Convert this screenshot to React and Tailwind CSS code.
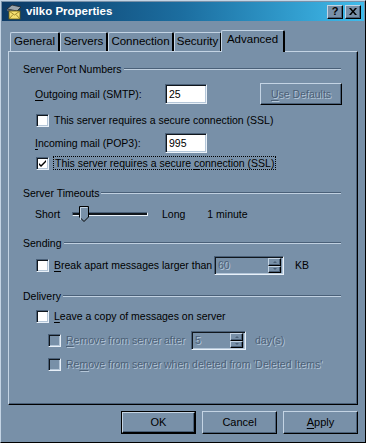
import React from "react";

const raised =
  "border border-t-[#c4d4e4] border-l-[#c4d4e4] border-r-black border-b-black shadow-[inset_-1px_-1px_0_#4a6078]";
const sunken =
  "border border-t-[#4a6078] border-l-[#4a6078] border-r-[#e8f0f8] border-b-[#e8f0f8] shadow-[inset_1px_1px_0_#10161c,inset_-1px_-1px_0_#b4c6d8]";
const disabledText = "text-[#4c6076] [text-shadow:1px_1px_0_#b4c6d8]";

const U = ({ children }) => <span className="underline underline-offset-2">{children}</span>;

const Checkbox = ({ checked, disabled }) => (
  <div
    className={`w-[13px] h-[13px] shrink-0 flex items-center justify-center ${sunken} ${
      disabled ? "bg-[#7890a8]" : "bg-white"
    }`}
  >
    {checked && (
      <svg width="9" height="9" viewBox="0 0 9 9">
        <path d="M1 4 L3 6 L8 1 L8 3 L3 8 L1 6 Z" fill="#000" />
      </svg>
    )}
  </div>
);

const GroupHeader = ({ label }) => (
  <div className="flex items-center h-[14px] pl-[14px] pr-[16px]">
    <span className="pr-[2px] whitespace-nowrap">{label}</span>
    <div className="flex-1 h-[2px] border-t border-t-[#4a6078] border-b border-b-[#c0d0e0]" />
  </div>
);

const Spinner = ({ value, width }) => (
  <div className={`${width} h-[19px] shrink-0 flex items-center ${sunken} bg-[#7890a8] pl-[3px] pr-[2px]`}>
    <span className={`flex-1 ${disabledText}`}>{value}</span>
    <div className="flex flex-col w-[13px] h-[15px]">
      <div className={`flex-1 flex items-center justify-center ${raised}`}>
        <div className="w-0 h-0 border-x-[2px] border-x-transparent border-b-[2px] border-b-[#4c6076]" />
      </div>
      <div className={`flex-1 flex items-center justify-center ${raised}`}>
        <div className="w-0 h-0 border-x-[2px] border-x-transparent border-t-[2px] border-t-[#4c6076]" />
      </div>
    </div>
  </div>
);

const Tab = ({ label, active }) => (
  <div
    className={`relative flex items-center justify-center border-l border-t border-l-[#c4d4e4] border-t-[#c4d4e4] rounded-t-[2px] border-r-2 border-r-black bg-[#7890a8] ${
      active ? "h-[22px] z-10 -mb-[1px] pb-[3px]" : "h-[19px]"
    }`}
  >
    <span className="text-[11.5px] whitespace-nowrap">{label}</span>
  </div>
);

export default function App() {
  return (
    <div className="w-[366px] h-[443px] bg-[#7890a8] text-black text-[10.5px] leading-none whitespace-nowrap [font-family:'Liberation_Sans',Arial,sans-serif] border border-t-[#c4d4e4] border-l-[#c4d4e4] border-r-black border-b-black p-[1px] overflow-hidden">
      {/* Title bar */}
      <div className="h-[19px] flex items-center bg-gradient-to-r from-[#0c3a66] via-[#1c6ea0] to-[#40bcec] pl-[3px] pr-[3px]">
        <svg width="18" height="16" viewBox="0 0 18 16" className="shrink-0">
          <path d="M2 5 L7 1 L16 3 L12 7 Z" fill="#9aa4ac" stroke="#202428" strokeWidth="0.8" />
          <path d="M2 5 L12 7 L12 9 L2 7 Z" fill="#5a6470" />
          <rect x="4" y="7" width="11" height="8" fill="#f4e070" stroke="#6a5a10" strokeWidth="0.8" />
          <path d="M4 7 L9.5 11 L15 7 M4 15 L8 10.5 M15 15 L11 10.5" fill="none" stroke="#8a7420" strokeWidth="0.8" />
        </svg>
        <span className="ml-[3px] text-white font-bold text-[11.5px]">vilko Properties</span>
        <div className="ml-auto flex gap-[2px]">
          <div className={`w-[16px] h-[14px] flex items-center justify-center bg-[#7890a8] ${raised}`}>
            <span className="font-bold text-[11px]">?</span>
          </div>
          <div className={`w-[16px] h-[14px] flex items-center justify-center bg-[#7890a8] ${raised}`}>
            <svg width="8" height="7" viewBox="0 0 8 7">
              <path d="M0 0 L2 0 L4 2.5 L6 0 L8 0 L5 3.5 L8 7 L6 7 L4 4.5 L2 7 L0 7 L3 3.5 Z" fill="#000" />
            </svg>
          </div>
        </div>
      </div>

      {/* Tabs */}
      <div className="flex items-end pl-[8px] mt-[8px] h-[22px]">
        <div className="w-[50px]"><Tab label="General" /></div>
        <div className="w-[48px]"><Tab label="Servers" /></div>
        <div className="w-[66px]"><Tab label="Connection" /></div>
        <div className="w-[48px]"><Tab label="Security" /></div>
        <div className="w-[64px] -ml-[1px]"><Tab label="Advanced" active /></div>
      </div>

      {/* Panel */}
      <div className="ml-[6px] w-[350px] h-[354px] border border-t-[#c4d4e4] border-l-[#c4d4e4] border-r-black border-b-black shadow-[inset_-1px_-1px_0_#4a6078] flex flex-col">
        <div className="mt-[10px]">
          <GroupHeader label="Server Port Numbers" />
        </div>
        <div className="mt-[7px] h-[22px] flex items-center">
          <span className="ml-[26px] w-[130px]"><U>O</U>utgoing mail (SMTP):</span>
          <div className={`w-[42px] h-[20px] bg-white flex items-center pl-[3px] ${sunken}`}>25</div>
          <div className={`ml-[53px] w-[82px] h-[22px] flex items-center justify-center ${raised} ${disabledText}`}>
            <span><U>U</U>se Defaults</span>
          </div>
        </div>
        <div className="mt-[8px] h-[14px] flex items-center pl-[27px] gap-[5px]">
          <Checkbox />
          <span>This server requires a secure connection (SSL)</span>
        </div>
        <div className="mt-[6px] h-[20px] flex items-center">
          <span className="ml-[26px] w-[130px]"><U>I</U>ncoming mail (POP3):</span>
          <div className={`w-[42px] h-[20px] bg-white flex items-center pl-[3px] ${sunken}`}>995</div>
        </div>
        <div className="mt-[3px] h-[14px] flex items-center pl-[27px] gap-[5px]">
          <Checkbox checked />
          <span className="outline outline-1 outline-dotted outline-black px-[1px] py-[1px]">
            This server requires a secure <U>c</U>onnection (SSL)
          </span>
        </div>

        <div className="mt-[16px]">
          <GroupHeader label="Server Timeouts" />
        </div>
        <div className="mt-[2px] h-[24px] flex items-center">
          <span className="ml-[26px] w-[37px]">Short</span>
          <div className="relative w-[76px] h-[24px] flex items-center">
            <div className="w-full h-[4px] border border-t-[#4a6078] border-l-[#4a6078] border-r-[#e8f0f8] border-b-[#e8f0f8] bg-[#10161c]" />
            <svg className="absolute left-[7px] top-[4px]" width="10" height="16" viewBox="0 0 10 16">
              <path d="M0.5 0.5 H9.5 V11 L5 15.5 L0.5 11 Z" fill="#7890a8" stroke="#000" />
              <path d="M1.5 14 V1.5 H8.5" fill="none" stroke="#c4d4e4" />
            </svg>
          </div>
          <span className="ml-[14px]">Long</span>
          <span className="ml-[22px]">1 minute</span>
        </div>

        <div className="mt-[10px]">
          <GroupHeader label="Sending" />
        </div>
        <div className="mt-[6px] h-[19px] flex items-center pl-[27px]">
          <Checkbox />
          <span className="ml-[5px] w-[160px]"><U>B</U>reak apart messages larger than</span>
          <Spinner value="60" width="w-[70px]" />
          <span className="ml-[11px]">KB</span>
        </div>

        <div className="mt-[14px]">
          <GroupHeader label="Delivery" />
        </div>
        <div className="mt-[6px] h-[14px] flex items-center pl-[27px] gap-[5px]">
          <Checkbox />
          <span><U>L</U>eave a copy of messages on server</span>
        </div>
        <div className="mt-[8px] h-[19px] flex items-center pl-[39px]">
          <Checkbox disabled />
          <span className={`ml-[5px] w-[125px] ${disabledText}`}><U>R</U>emove from server after</span>
          <Spinner value="5" width="w-[55px]" />
          <span className={`ml-[9px] ${disabledText}`}>day(s)</span>
        </div>
        <div className="mt-[7px] h-[14px] flex items-center pl-[39px] gap-[5px]">
          <Checkbox disabled />
          <span className={disabledText}>Re<U>m</U>ove from server when deleted from 'Deleted Items'</span>
        </div>
      </div>

      {/* Buttons */}
      <div className="mt-[6px] flex justify-end gap-[6px] w-[356px]">
        <div className="w-[75px] h-[23px] border border-black">
          <div className={`w-full h-full flex items-center justify-center ${raised} text-[11px]`}>OK</div>
        </div>
        <div className={`w-[75px] h-[23px] flex items-center justify-center ${raised} text-[11px]`}>Cancel</div>
        <div className={`w-[75px] h-[23px] flex items-center justify-center ${raised} text-[11px]`}>
          <span><U>A</U>pply</span>
        </div>
      </div>
    </div>
  );
}
